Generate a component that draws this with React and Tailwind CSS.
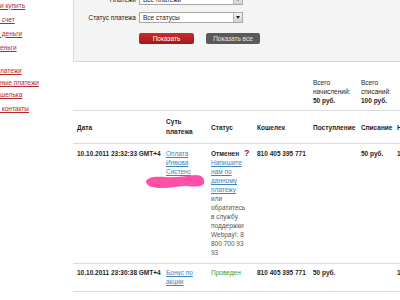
// Payment history page fragment (scrolled view).

const SIDE_LINKS = [
  { text: "и купить", mt: "mt-0" },
  { text: "\u00a0счет", mt: "mt-[5px]" },
  { text: "\u00a0деньги", mt: "mt-[5px]" },
  { text: "еньги", mt: "mt-[5px]" },
  { text: "латежи", mt: "mt-[14px]" },
  { text: "ные платежи", mt: "mt-[3px]" },
  { text: "шелька", mt: "mt-[3px]" },
  { text: "\u00a0контакты", mt: "mt-[5px]" },
];

const COLS = "grid grid-cols-[90px_45px_46px_56px_48px_36px_1fr]";

function Select({ value }) {
  return (
    <div className="flex h-[11px] w-[104px] items-center border border-[#a8a8a8] bg-white">
      <span className="flex-1 pl-[3px] whitespace-nowrap">{value}</span>
      <span className="flex h-full w-[9px] items-center justify-center border-l border-[#b5b5b5] bg-gradient-to-b from-[#f4f4f4] to-[#d2d2d2]">
        <span className="h-0 w-0 border-x-[2px] border-t-[3px] border-x-transparent border-t-[#222]" />
      </span>
    </div>
  );
}

function FilterRow({ label, value, className = "" }) {
  return (
    <div className={`flex items-center ${className}`}>
      <span className="w-[62px] text-right whitespace-nowrap text-[#222]">{label}</span>
      <span className="ml-[3px]">
        <Select value={value} />
      </span>
    </div>
  );
}

function Link({ children }) {
  return <span className="text-[#3a86c0] underline">{children}</span>;
}

export default function App() {
  return (
    <div className="flex h-[300px] w-[400px] overflow-hidden bg-white font-['Liberation_Sans',Arial,sans-serif] text-[6.5px] leading-[9px] text-[#1e1e1e]">
      {/* left menu, clipped by the scroll */}
      <div className="flex w-[73px] shrink-0 flex-col overflow-hidden pt-[0.5px]">
        {SIDE_LINKS.map((l) => (
          <span key={l.text} className={`${l.mt} whitespace-nowrap text-[#b52a2a] underline`}>
            {l.text}
          </span>
        ))}
      </div>

      <div className="relative flex-1 overflow-hidden">
        {/* filter panel */}
        <div className="h-[62px] overflow-hidden border-b border-l border-[#d9d9d9] bg-[#f4f4f4]">
          <div className="-mt-[6px] flex flex-col">
            <FilterRow label="Платежи" value="Все платежи" />
            <FilterRow label="Статус платежа" value="Все статусы" className="mt-[7px]" />
            <div className="mt-[10px] ml-[65px] flex gap-[12px]">
              <span className="flex h-[11px] w-[55px] items-center justify-center rounded-[2px] bg-gradient-to-b from-[#cc2b2b] to-[#a51616] text-white">
                Показать
              </span>
              <span className="flex h-[11px] w-[54px] items-center justify-center rounded-[2px] bg-[#5a5a5a] text-[#e6e6e6]">
                Показать все
              </span>
            </div>
          </div>
        </div>

        {/* totals */}
        <div className={`${COLS} pt-[16px] pb-[5px]`}>
          <div className="col-start-5 pl-[3px] whitespace-nowrap">
            Всего
            <br />
            начислений:
            <br />
            <b>50 руб.</b>
          </div>
          <div className="pl-[3px] whitespace-nowrap">
            Всего
            <br />
            списаний:
            <br />
            <b>100 руб.</b>
          </div>
        </div>

        {/* table */}
        <div className={`${COLS} h-[34px] items-center border-y border-[#dcdcdc] font-bold`}>
          <div className="pl-[4px]">Дата</div>
          <div className="pl-[3px] leading-[10px]">
            Суть
            <br />
            платежа
          </div>
          <div className="pl-[3px]">Статус</div>
          <div className="pl-[3px]">Кошелек</div>
          <div className="pl-[3px] whitespace-nowrap">Поступление</div>
          <div className="pl-[3px]">Списание</div>
          <div className="pl-[3px]">Н</div>
        </div>

        <div className={`${COLS} border-b border-[#dcdcdc] pt-[5px] pb-[6px]`}>
          <div className="pl-[4px] font-bold whitespace-nowrap">10.10.2011 23:32:33 GMT+4</div>
          <div className="pl-[3px] whitespace-nowrap">
            <Link>Оплата</Link>
            <br />
            <Link>Инвова</Link>
            <br />
            <Link>Систенс</Link>
          </div>
          <div className="flex pl-[3px]">
            <div className="w-[33px] whitespace-nowrap">
              <b>Отменен</b>
              <br />
              <Link>Напишите</Link>
              <br />
              <Link>нам по</Link>
              <br />
              <Link>данному</Link>
              <br />
              <Link>платежу</Link>
              <span className="text-[#555]">
                <br />
                или
                <br />
                обратитесь
                <br />в службу
                <br />
                поддержки
                <br />
                Webpay!: 8
                <br />
                800 700 93
                <br />
                93
              </span>
            </div>
            <span className="text-[9px] leading-[9px] font-bold text-[#a31414]">?</span>
          </div>
          <div className="pl-[3px] font-bold whitespace-nowrap">810 405 395 771</div>
          <div />
          <div className="pl-[3px] font-bold whitespace-nowrap">50 руб.</div>
          <div className="pl-[3px] font-bold">1</div>
        </div>

        <div className={`${COLS} border-b border-[#dcdcdc] pt-[4px] pb-[5px]`}>
          <div className="pl-[4px] font-bold whitespace-nowrap">10.10.2011 23:30:38 GMT+4</div>
          <div className="pl-[3px] whitespace-nowrap">
            <Link>Бонус по</Link>
            <br />
            <Link>акции</Link>
          </div>
          <div className="pl-[3px] text-[#3a9a2c]">Проведен</div>
          <div className="pl-[3px] font-bold whitespace-nowrap">810 405 395 771</div>
          <div className="pl-[3px] font-bold whitespace-nowrap">50 руб.</div>
          <div />
          <div className="pl-[3px] font-bold">1</div>
        </div>

        {/* pink marker scribble over the payment description */}
        <svg className="absolute left-[72px] top-[174px]" width="60" height="15" viewBox="0 0 60 15">
          <path
            d="M1,7 C3,3 10,2 20,3 C30,4 40,2 50,1 C57,1 60,4 59,9 C58,13 50,13 42,12 C34,12 26,14 16,14 C7,14 1,12 1,7 Z"
            fill="#ff4fa6"
          />
        </svg>
      </div>
    </div>
  );
}
